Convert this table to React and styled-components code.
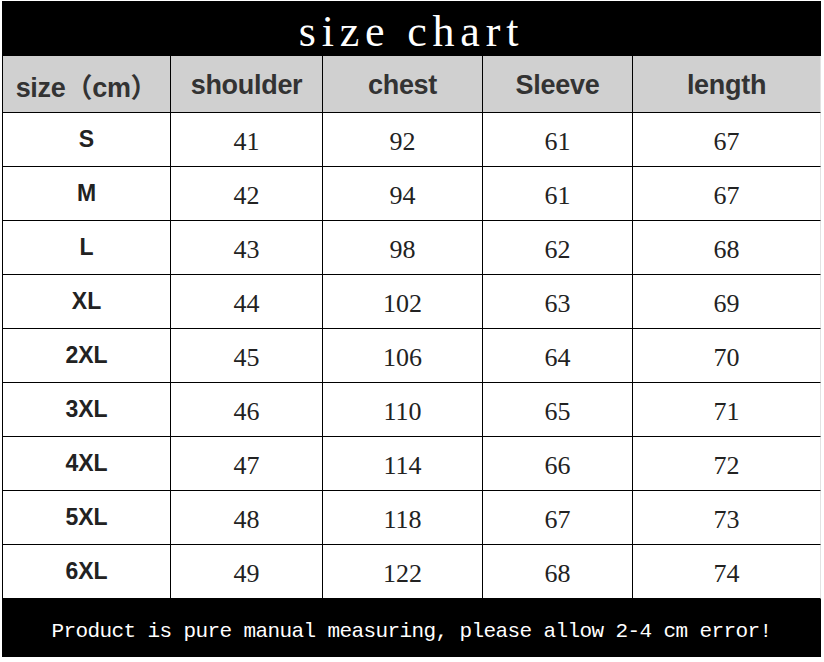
import styled, { createGlobalStyle } from "styled-components";

const GlobalStyle = createGlobalStyle`
  html, body {
    margin: 0;
    padding: 0;
    background: #ffffff;
  }
`;

const Page = styled.div`
  width: 824px;
  height: 662px;
  background: #ffffff;
  padding: 1px 0 0 2px;
  box-sizing: border-box;
  overflow: hidden;
`;

const Sheet = styled.div`
  width: 819px;
  display: flex;
  flex-direction: column;
`;

const Banner = styled.div`
  background: #000;
  color: #fff;
  height: ${(p) => p.h}px;
  display: flex;
  align-items: center;
  justify-content: center;
  font-family: ${(p) => (p.mono ? '"Liberation Mono", monospace' : '"Liberation Serif", serif')};
  font-size: ${(p) => p.size}px;
  letter-spacing: ${(p) => p.spacing}px;
  padding-top: ${(p) => p.pad || 0}px;
  box-sizing: border-box;
  white-space: pre;
`;

const Grid = styled.div`
  display: grid;
  grid-template-columns: 169px 152px 160px 150px 188px;
  grid-auto-rows: ${(p) => p.rowH}px;
  background: ${(p) => (p.head ? "#d0d0d0" : "#fff")};
`;

const Cell = styled.div`
  display: flex;
  align-items: center;
  justify-content: center;
  border-bottom: 1.5px solid #000;
  border-right: 1.5px solid ${(p) => (p.last ? "#e2e2e2" : "#000")};
  border-left: ${(p) => (p.first ? "1.5px solid #000" : "none")};
  box-sizing: border-box;
  padding-top: ${(p) => p.pt || 0}px;
`;

const HeadText = styled.span`
  font-family: "Liberation Sans", "Noto Sans CJK SC", sans-serif;
  font-weight: bold;
  font-size: 27px;
  color: #333;
  letter-spacing: -0.3px;
`;

const SizeText = styled.span`
  font-family: "Liberation Sans", sans-serif;
  font-weight: bold;
  font-size: 23px;
  color: #222;
`;

const Num = styled.span`
  font-family: "Liberation Serif", serif;
  font-size: 26px;
  color: #222;
`;

const headers = ["size（cm）", "shoulder", "chest", "Sleeve", "length"];

const rows = [
  ["S", 41, 92, 61, 67],
  ["M", 42, 94, 61, 67],
  ["L", 43, 98, 62, 68],
  ["XL", 44, 102, 63, 69],
  ["2XL", 45, 106, 64, 70],
  ["3XL", 46, 110, 65, 71],
  ["4XL", 47, 114, 66, 72],
  ["5XL", 48, 118, 67, 73],
  ["6XL", 49, 122, 68, 74],
];

export default function App() {
  return (
    <Page>
      <GlobalStyle />
      <Sheet>
        <Banner h={55} size={44} spacing={5.8} pad={6}>
          size chart
        </Banner>
        <Grid head rowH={57}>
          {headers.map((h, i) => (
            <Cell key={h} first={i === 0} last={i === 4} pt={3}>
              <HeadText>{h}</HeadText>
            </Cell>
          ))}
        </Grid>
        <Grid rowH={54}>
          {rows.map((r) =>
            r.map((v, i) => (
              <Cell key={r[0] + i} first={i === 0} last={i === 4} pt={i === 0 ? 0 : 4}>
                {i === 0 ? <SizeText>{v}</SizeText> : <Num>{v}</Num>}
              </Cell>
            ))
          )}
        </Grid>
        <Banner h={58} size={21} spacing={-0.6} mono pad={6}>
          Product is pure manual measuring, please allow 2-4 cm error!
        </Banner>
      </Sheet>
    </Page>
  );
}
